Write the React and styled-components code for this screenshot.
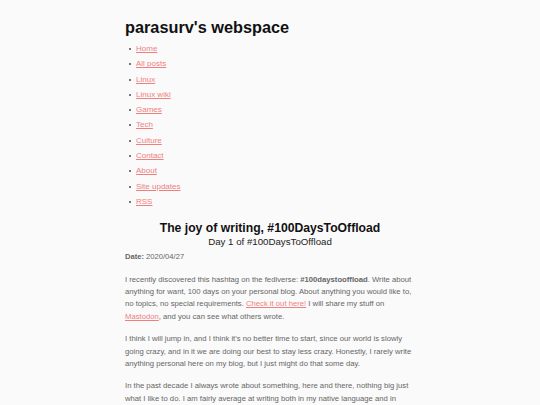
import React from "react";
import styled, { createGlobalStyle } from "styled-components";

const GlobalStyle = createGlobalStyle`
  html, body {
    margin: 0;
    padding: 0;
    background: #fafafa;
  }
  body {
    font-family: "Liberation Sans", Arial, sans-serif;
    font-size: 7.7px;
    color: #666;
  }
`;

const Page = styled.div`
  width: 290px;
  margin: 0 auto;
  padding-top: 17px;
`;

const SiteTitle = styled.h1`
  font-size: 16.3px;
  font-weight: bold;
  color: #111;
  margin: 0 0 4px;
  line-height: 20px;
`;

const NavList = styled.ul`
  margin: 0;
  padding-left: 11px;
  list-style: none;
`;

const NavItem = styled.li`
  position: relative;
  line-height: 15.3px;
  font-size: 8px;

  &::before {
    content: "";
    position: absolute;
    left: -7px;
    top: 7px;
    width: 2px;
    height: 2px;
    background: #777;
  }
`;

const Link = styled.a`
  color: #f08080;
  text-decoration: underline;
`;

const PostHeader = styled.header`
  text-align: center;
  margin-top: 12px;
`;

const PostTitle = styled.h2`
  font-size: 12.2px;
  font-weight: bold;
  color: #111;
  margin: 0;
  line-height: 14px;
`;

const PostSub = styled.h3`
  font-size: 9.7px;
  font-weight: normal;
  color: #222;
  margin: 0;
  line-height: 13px;
`;

const DateLine = styled.p`
  margin: 3px 0 0;
  line-height: 12px;
  font-size: 7.6px;
`;

const Para = styled.p`
  margin: 10.3px 0 0;
  line-height: 12.33px;
`;

const nav = [
  "Home",
  "All posts",
  "Linux",
  "Linux wiki",
  "Games",
  "Tech",
  "Culture",
  "Contact",
  "About",
  "Site updates",
  "RSS",
];

export default function App() {
  return (
    <>
      <GlobalStyle />
      <Page>
        <SiteTitle>parasurv's webspace</SiteTitle>
        <NavList>
          {nav.map((n) => (
            <NavItem key={n}>
              <Link href="#">{n}</Link>
            </NavItem>
          ))}
        </NavList>
        <PostHeader>
          <PostTitle>The joy of writing, #100DaysToOffload</PostTitle>
          <PostSub>Day 1 of #100DaysToOffload</PostSub>
        </PostHeader>
        <DateLine>
          <b>Date:</b> 2020/04/27
        </DateLine>
        <Para>
          I recently discovered this hashtag on the fediverse:{" "}
          <b>#100daystooffload</b>. Write about anything for want, 100 days on
          your personal blog. About anything you would like to, no topics, no
          special requirements. <Link href="#">Check it out here!</Link> I will
          share my stuff on <Link href="#">Mastodon</Link>, and you can see
          what others wrote.
        </Para>
        <Para>
          I think I will jump in, and I think it's no better time to start,
          since our world is slowly going crazy, and in it we are doing our
          best to stay less crazy. Honestly, I rarely write anything personal
          here on my blog, but I just might do that some day.
        </Para>
        <Para>
          In the past decade I always wrote about something, here and there,
          nothing big just what I like to do. I am fairly average at writing
          both in my native language and in English.
        </Para>
      </Page>
    </>
  );
}
